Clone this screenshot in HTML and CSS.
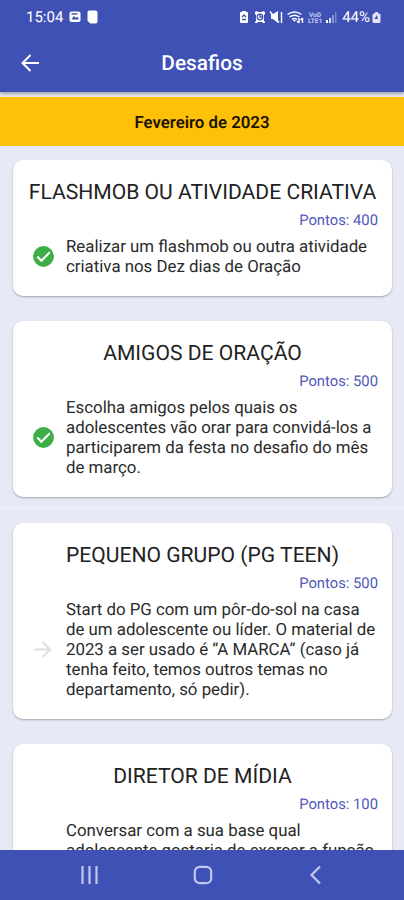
FILE: index.html
```html
<!DOCTYPE html>
<html lang="pt-BR">
<head>
<meta charset="utf-8">
<title>Desafios</title>
<link rel="stylesheet" href="styles.css">
</head>
<body>
<div class="phone">
  <header class="top">
    <div class="status">
      <span class="clock">15:04</span>
      <svg class="notif" width="30" height="14" viewBox="0 0 30 14"><rect x="0.5" y="1.5" width="11" height="10.5" rx="2" fill="#fff"/><path d="M2.5 9.5 5 6l2 2 1.5-1.5 1.5 3z" fill="#3f51b5"/><rect x="2.5" y="3.2" width="6" height="1.4" fill="#3f51b5"/><path d="M20 .5h6.500a2 2 0 0 1 2 2v9a2 2 0 0 1-2 2h-5l-3-2.500v-8.500a2 2 0 0 1 1.500-2z" fill="#fff"/></svg>
      <svg class="signals" width="102" height="16" viewBox="0 0 102 16">
        <g fill="#fff">
          <path d="M3 3h1V2h4v1h1q1 0 1 1v9q0 1-1 1H3q-1 0-1-1V4q0-1 1-1z"/>
          <path d="m17 3 2-1 1 1h4l1-1 2 1v2l-1 1v6l1 1v1h-2l-1-1h-4l-1 1h-2v-1l1-1V6l-1-1z"/>
          <path d="M33 5h2l5-3v12l-5-4h-2z"/>
          <rect x="88" y="11" width="2" height="3"/><rect x="91" y="9" width="2" height="5" opacity=".8"/><rect x="94" y="6" width="2" height="8" opacity=".4"/><rect x="97" y="3" width="1.500" height="11" opacity=".3"/>
        </g>
        <g fill="none" stroke="#3f51b5" stroke-width="1.300"><path d="m4 8 2-2 2 2M4 10.500h4"/><circle cx="22" cy="8" r="2.800"/><path d="M22 6v2h2"/></g>
        <g fill="none" stroke="#fff" stroke-width="1.400"><path d="m32 2.500 9 11M43.500 3v11"/><path d="M49.500 5.500q7-5 14 0M51.500 8q5-3.500 10 0M54 10.500q2.500-2 5 0"/><path d="M61 9v5m-2-2 2 2m3.500 0V9m-2 2 2-2"/></g>
        <path d="m55 11 1.500 2 1.500-2z" fill="#fff"/>
        <text class="volte" x="71" y="7.500">VoD</text><text class="volte" x="70" y="14">LTE1</text>
      </svg>
      <span class="percent">44%</span>
      <svg class="battery" width="9" height="14" viewBox="0 0 9 14"><path d="M3 2h3v1.500h1q1.500 0 1.500 1.500v6.500Q8.500 13 7 13H2Q.5 13 .5 11.500V5Q.5 3.500 2 3.500h1z" fill="#fff" opacity=".85"/><path d="M4.800 5 2.500 9H6z" fill="#3f51b5"/></svg>
    </div>
    <div class="appbar">
      <svg class="back" width="20" height="20" viewBox="0 0 20 20"><path d="M19 10H2.500M10.500 2 2.500 10l8 8" fill="none" stroke="#fff" stroke-width="2"/></svg>
      <h1>Desafios</h1>
    </div>
  </header>
  <div class="month">Fevereiro de 2023</div>
  <main>
    <section class="card c1">
      <h2>FLASHMOB OU ATIVIDADE CRIATIVA</h2>
      <div class="points">Pontos: 400</div>
      <div class="row">
        <svg class="mark" viewBox="0 0 24 24"><circle cx="12" cy="12" r="10" fill="#3dae45"/><path d="m6 12 4 4 8-8" fill="none" stroke="#fff" stroke-width="2"/></svg>
        <p>Realizar um flashmob ou outra atividade<br>criativa nos Dez dias de Oração</p>
      </div>
    </section>
    <section class="card c2">
      <h2>AMIGOS DE ORAÇÃO</h2>
      <div class="points">Pontos: 500</div>
      <div class="row">
        <svg class="mark" viewBox="0 0 24 24"><circle cx="12" cy="12" r="10" fill="#3dae45"/><path d="m6 12 4 4 8-8" fill="none" stroke="#fff" stroke-width="2"/></svg>
        <p>Escolha amigos pelos quais os<br>adolescentes vão orar para convidá-los a<br>participarem da festa no desafio do mês<br>de março.</p>
      </div>
    </section>
    <div class="divider"></div>
    <section class="card c3">
      <h2>PEQUENO GRUPO (PG TEEN)</h2>
      <div class="points">Pontos: 500</div>
      <div class="row">
        <svg class="mark" viewBox="0 0 24 24"><path d="M3 12h15M11 4.700l7.300 7.300-7.300 7.300" fill="none" stroke="#dedede" stroke-width="1.800"/></svg>
        <p>Start do PG com um pôr-do-sol na casa<br>de um adolescente ou líder. O material de<br>2023 a ser usado é “A MARCA” (caso já<br>tenha feito, temos outros temas no<br>departamento, só pedir).</p>
      </div>
    </section>
    <section class="card c4">
      <h2>DIRETOR DE MÍDIA</h2>
      <div class="points">Pontos: 100</div>
      <div class="row">
        <span class="mark"></span>
        <p>Conversar com a sua base qual<br>adolescente gostaria de exercer a função</p>
      </div>
    </section>
  </main>
  <nav>
    <svg width="20" height="20" viewBox="0 0 20 20"><path d="M2.500 1v18M9.500 1v18M16.500 1v18" stroke="#c0c6f0" stroke-width="2.200"/></svg>
    <svg width="20" height="20" viewBox="0 0 20 20"><rect x="1.800" y="1.800" width="16.400" height="16.400" rx="5" fill="none" stroke="#c0c6f0" stroke-width="2.200"/></svg>
    <svg width="20" height="20" viewBox="0 0 20 20"><path d="M14 1.500 5.500 10l8.500 8.500" fill="none" stroke="#c0c6f0" stroke-width="2.200"/></svg>
  </nav>
</div>
</body>
</html>
```
FILE: styles.css
```css
* { box-sizing: border-box; margin: 0; padding: 0; }
body { font-family: Roboto, sans-serif; background: #e7e9f6; text-rendering: geometricPrecision; }
svg { display: block; flex: none; }
.phone { width: 404px; height: 900px; overflow: hidden; display: flex; flex-direction: column; }
.top { height: 92px; flex: none; background: #3f51b5; color: #fff; box-shadow: 0 2px 3px rgba(0,0,0,.3); }
.status { height: 34px; display: flex; align-items: center; padding: 0 23px 0 26px; font-size: 15px; }
.clock { width: 43px; }
.notif { margin-right: auto; }
.signals { margin-right: 2px; }
.volte { font: 700 6.500px Roboto, sans-serif; fill: #c5cbef; }
.percent { font-size: 15px; margin-right: 2px; }
.appbar { height: 58px; display: grid; grid-template-columns: 1fr auto 1fr; align-items: center; padding: 0 20px; }
h1 { font-size: 20.800px; font-weight: 500; line-height: 24px; padding-top: 2px; }
.month { height: 49px; margin-top: 5px; flex: none; background: #ffc107; color: #1a1400; font-size: 16.800px; font-weight: 600; line-height: 52px; text-align: center; }
main { flex: 1; min-height: 0; overflow: hidden; padding: 14px 12px 0 13px; display: flex; flex-direction: column; }
.card { flex: none; background: #fff; border-radius: 10px; box-shadow: 0 1px 2px rgba(0,0,0,.3); padding: 21px 14px 0 18px; }
.c1 { height: 136px; margin-bottom: 25px; }
.c2 { height: 176px; margin-bottom: 11px; }
.divider { flex: none; height: 1px; margin: 0 -12px 14px -13px; background: #f1f2fb; }
.c3 { height: 196px; margin-bottom: 25px; }
.c4 { height: 180px; }
h2 { font-size: 21.100px; font-weight: 400; line-height: 24px; text-align: center; color: #222; white-space: nowrap; margin: 0 -4px 0 -8px; }
.points { text-align: right; font-size: 14.800px; line-height: 18px; margin-top: 6px; color: #5059b8; }
.row { display: flex; align-items: center; margin-top: 9px; }
.mark { width: 25px; height: 25px; flex: none; margin: -2px 10.500px 0 -.5px; }
p { font-size: 16.840px; line-height: 19.900px; color: #2b2b2b; white-space: nowrap; }
nav { height: 50px; flex: none; background: #3f51b5; display: flex; align-items: center; justify-content: space-between; padding: 0 78px 0 80px; }
```
